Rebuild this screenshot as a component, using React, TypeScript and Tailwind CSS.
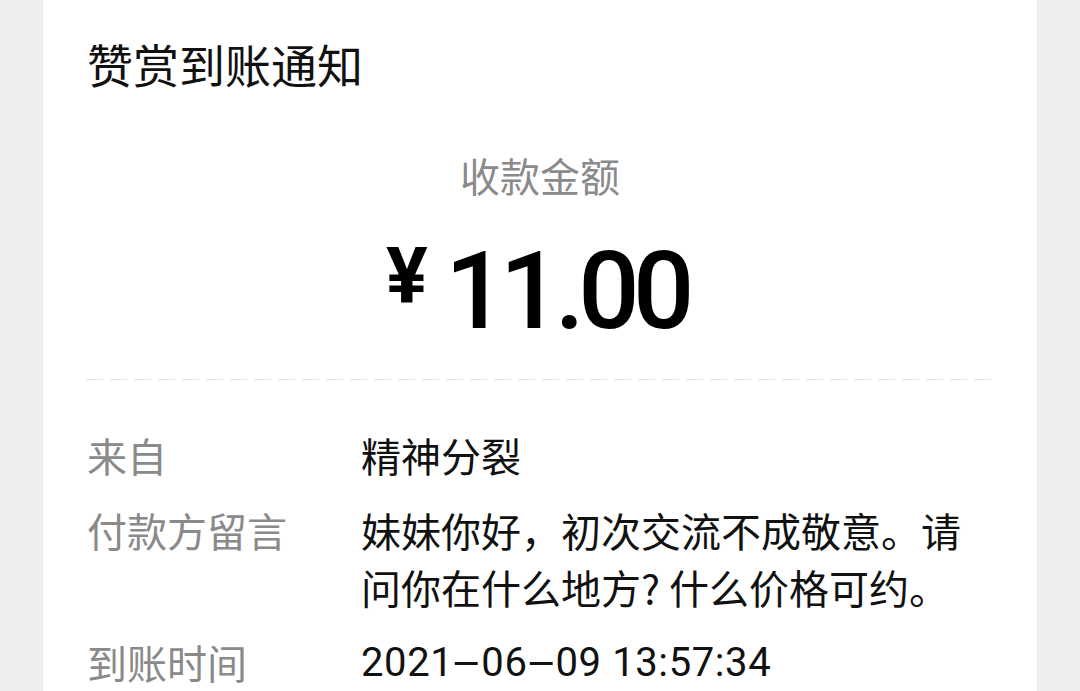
import React from "react";

const cjk = { fontFamily: '"Noto Sans CJK SC", "Noto Sans", sans-serif' };
const roboto = { fontFamily: 'Roboto, "Liberation Sans", sans-serif' };

function Dash() {
  return <span className="inline-block w-[28px] text-center scale-x-[2.4]">-</span>;
}

export default function App() {
  return (
    <div className="w-[1080px] h-[691px] overflow-hidden bg-[#ededed] flex justify-center" style={cjk}>
      <div className="w-[994px] h-full bg-white px-[43px] flex flex-col">
        <div className="mt-[40px] text-[46px] leading-[46px] text-[#111111] pl-[1px]">赞赏到账通知</div>
        <div className="mt-[69px] text-center text-[40px] leading-[40px] text-[#8a8a8a]">收款金额</div>
        <div className="mt-[42px] flex justify-center items-start h-[108px] pr-[6px]">
          <span className="text-[78px] leading-[76px] font-bold text-black mt-[2px] mr-[17px]" style={roboto}>
            ¥
          </span>
          <span className="text-[108px] leading-[108px] font-medium text-black tracking-[-6.5px]" style={roboto}>
            11.00
          </span>
        </div>
        <div className="mt-[34px] h-[2px] w-full bg-[image:repeating-linear-gradient(90deg,#e4e4e4_0px,#e4e4e4_17px,#ffffff_17px,#ffffff_24px)]" />
        <div className="mt-[47px] flex flex-col gap-[18px] text-[40px] leading-[57px]">
          <div className="flex">
            <div className="w-[275px] shrink-0 text-[#8a8a8a] pl-[1px]">来自</div>
            <div className="flex-1 text-[#111111]">精神分裂</div>
          </div>
          <div className="flex">
            <div className="w-[275px] shrink-0 text-[#8a8a8a] pl-[1px]">付款方留言</div>
            <div className="flex-1 text-[#111111]">
              妹妹你好，初次交流不成敬意。请问你在什么地方? 什么价格可约。
            </div>
          </div>
          <div className="flex">
            <div className="w-[275px] shrink-0 text-[#8a8a8a] pl-[1px]">到账时间</div>
            <div className="flex-1 text-[#111111] tracking-[0.6px] whitespace-nowrap" style={roboto}>
              2021<Dash />06<Dash />09 13:57:34
            </div>
          </div>
        </div>
      </div>
    </div>
  );
}
